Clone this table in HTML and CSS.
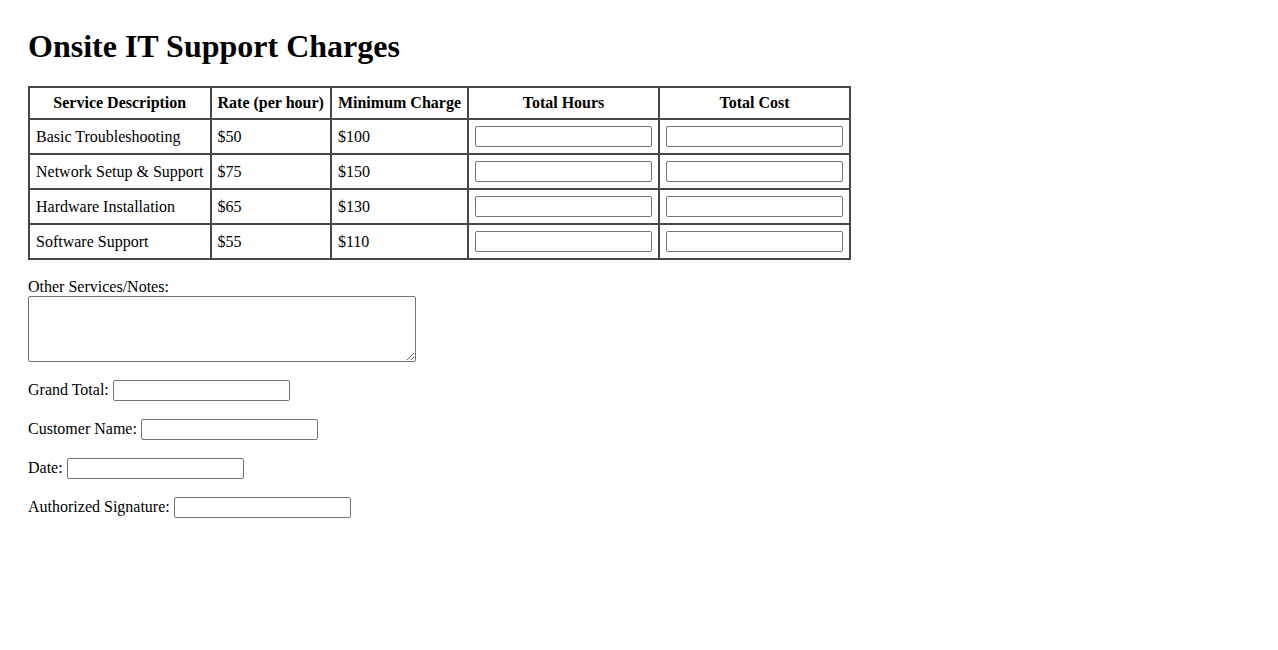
FILE: index.html
```html
<!DOCTYPE html>
<html>
<head>
<meta charset="utf-8">
<title>Onsite IT Support Charges</title>
<link rel="stylesheet" href="styles.css">
</head>
<body>
<h1 class="title">Onsite IT Support Charges</h1>
<table class="charges">
  <thead>
    <tr>
      <th>Service Description</th>
      <th>Rate (per hour)</th>
      <th>Minimum Charge</th>
      <th>Total Hours</th>
      <th>Total Cost</th>
    </tr>
  </thead>
  <tbody>
    <tr>
      <td>Basic Troubleshooting</td>
      <td>$50</td>
      <td>$100</td>
      <td><input class="field" type="text"></td>
      <td><input class="field" type="text"></td>
    </tr>
    <tr>
      <td>Network Setup &amp; Support</td>
      <td>$75</td>
      <td>$150</td>
      <td><input class="field" type="text"></td>
      <td><input class="field" type="text"></td>
    </tr>
    <tr>
      <td>Hardware Installation</td>
      <td>$65</td>
      <td>$130</td>
      <td><input class="field" type="text"></td>
      <td><input class="field" type="text"></td>
    </tr>
    <tr>
      <td>Software Support</td>
      <td>$55</td>
      <td>$110</td>
      <td><input class="field" type="text"></td>
      <td><input class="field" type="text"></td>
    </tr>
  </tbody>
</table>
<div class="notes">
  <label class="notes-label" for="notes">Other Services/Notes:</label>
  <textarea class="notes-box" id="notes"></textarea>
</div>
<p class="row"><label>Grand Total:</label> <input class="field" type="text"></p>
<p class="row"><label>Customer Name:</label> <input class="field" type="text"></p>
<p class="row"><label>Date:</label> <input class="field" type="text"></p>
<p class="row"><label>Authorized Signature:</label> <input class="field" type="text"></p>
</body>
</html>
```
FILE: styles.css
```css
body {
  margin: 0;
  padding: 28px;
  font-family: "Liberation Serif", "Times New Roman", serif;
  font-size: 16px;
  color: #000;
  background: #fff;
}
.title {
  font-size: 32px;
  font-weight: bold;
  margin: 0 0 21px 0;
  line-height: 37px;
}
.charges {
  border-collapse: collapse;
  border: 2px solid #474747;
}
.charges th,
.charges td {
  border: 2px solid #474747;
  padding: 6px 6px;
  text-align: left;
  line-height: 18px;
}
.charges th {
  text-align: center;
  font-weight: bold;
}
.charges td .field {
  display: block;
}
.field {
  box-sizing: border-box;
  width: 177px;
  height: 21px;
  border: 1px solid #767676;
  border-radius: 2px;
  padding: 1px 2px;
  font-family: "Liberation Sans", Arial, sans-serif;
  font-size: 13px;
  background: #fff;
  margin: 0;
  vertical-align: baseline;
}
.notes {
  margin-top: 18px;
}
.notes-label {
  display: block;
  line-height: 18px;
}
.notes-box {
  display: block;
  box-sizing: border-box;
  width: 388px;
  height: 66px;
  margin: 0;
  border: 1px solid #767676;
  border-radius: 2px;
  padding: 2px;
  font-family: "Liberation Mono", monospace;
  font-size: 13px;
}
.row {
  margin: 17px 0 0 0;
  line-height: 21px;
}
```
